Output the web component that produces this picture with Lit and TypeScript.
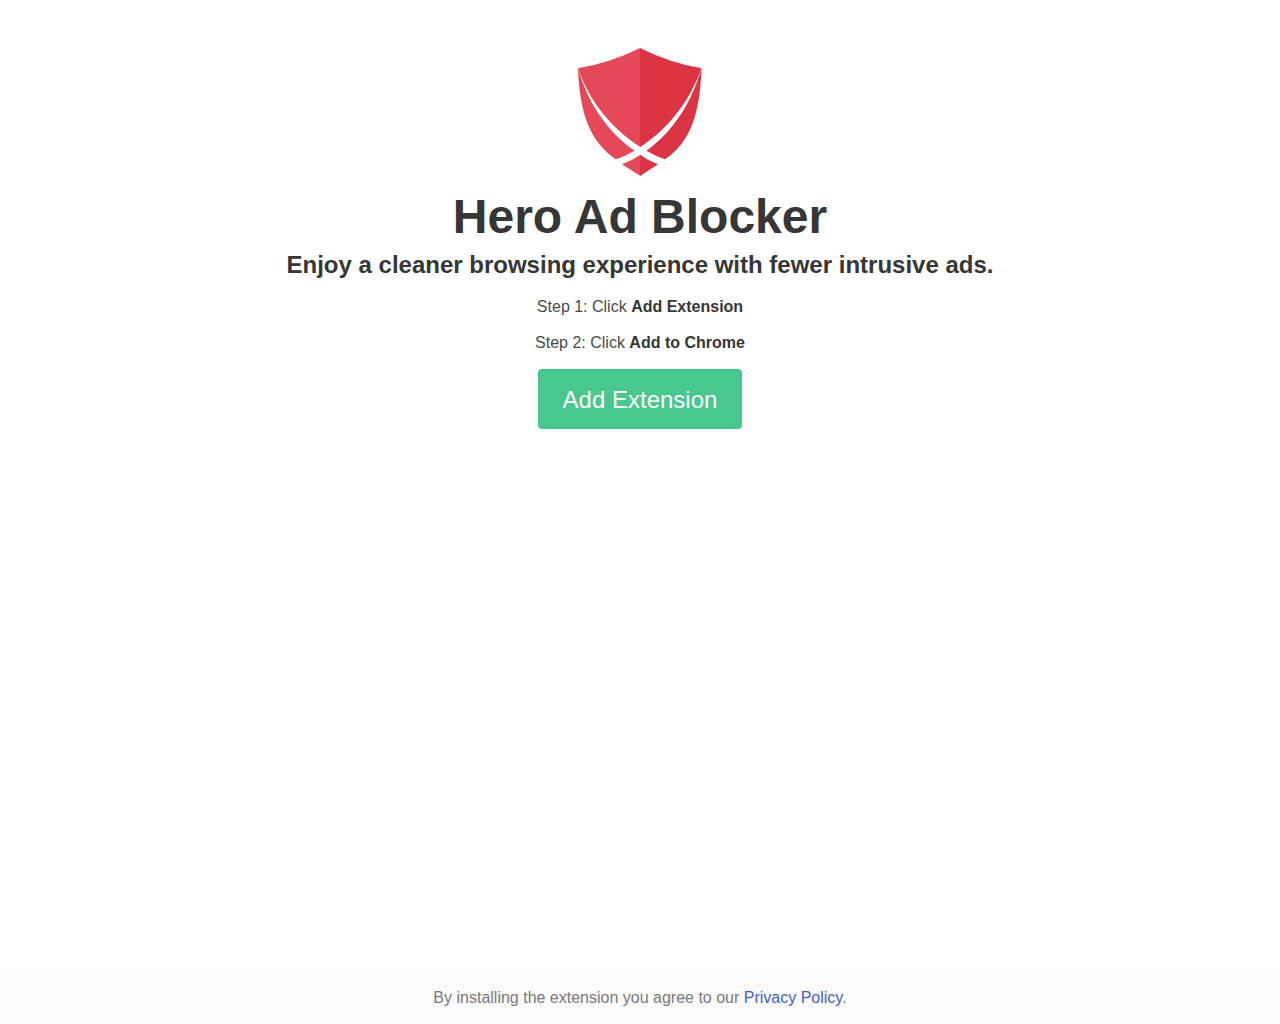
import { LitElement, html, css } from "lit";
import { customElement } from "lit/decorators.js";

@customElement("hero-shield")
class HeroShield extends LitElement {
  static styles = css`
    :host {
      display: block;
      width: 128px;
      height: 128px;
    }
    .shield {
      display: block;
      width: 100%;
      height: 100%;
    }
    .light {
      fill: #e54858;
    }
    .dark {
      fill: #dc3444;
    }
  `;

  render() {
    return html`
      <svg class="shield" viewBox="0 0 128 128" role="img" aria-label="Shield">
        <path class="light" d="M64 0Q34 15 2 20.300C12 50 33 79 64.500 99.300V0Z" />
        <path class="light" d="M2 20.300C3.500 66 14.500 94 39.700 111.200Q50 108 58.500 102.700C29 82 11.500 53 2 20.300Z" />
        <path class="light" d="M64.500 106.700Q56 112.500 46 116.300L64.500 128Z" />
        <path class="dark" d="M64 0Q94 15 125.500 20.300C115 50 95 79 64 99.300Z" />
        <path class="dark" d="M125.500 20.300C124 66 114 95 89 111.200Q79 108 70.500 102.700C99 82 116 53 125.500 20.300Z" />
        <path class="dark" d="M64 106.700Q72 112.500 82 116.300L64 128Z" />
      </svg>
    `;
  }
}

@customElement("app-root")
class AppRoot extends LitElement {
  static styles = css`
    :host {
      display: flex;
      flex-direction: column;
      min-height: 100vh;
      background: #fff;
      color: #4a4a4a;
      font-family: "Liberation Sans", Helvetica, Arial, sans-serif;
      font-size: 16px;
      line-height: 24px;
    }
    .hero {
      flex: 1;
      display: flex;
      flex-direction: column;
      align-items: center;
      padding: 48px 24px;
      text-align: center;
    }
    .title,
    .subtitle,
    .step {
      margin: 0;
    }
    .title {
      margin-top: 14px;
      color: #363636;
      font-size: 48px;
      line-height: 54px;
      font-weight: 700;
    }
    .subtitle {
      margin-top: 6px;
      color: #363636;
      font-size: 24px;
      line-height: 30px;
      font-weight: 700;
    }
    .steps {
      display: flex;
      flex-direction: column;
      gap: 12px;
      margin: 15px 0 14px;
    }
    .step strong {
      color: #363636;
    }
    .add {
      height: 60px;
      padding: 2px 25px 0;
      border: 0;
      border-radius: 4px;
      background: #48c78e;
      color: #fff;
      font: inherit;
      font-size: 24px;
      cursor: pointer;
    }
    .footer {
      padding: 18px 24px 14px;
      background: #fafafa;
      color: #7a7a7a;
      text-align: center;
    }
    .link {
      color: #485fc7;
      text-decoration: none;
    }
  `;

  render() {
    return html`
      <main class="hero">
        <hero-shield></hero-shield>
        <h1 class="title">Hero Ad Blocker</h1>
        <h2 class="subtitle">Enjoy a cleaner browsing experience with fewer intrusive ads.</h2>
        <div class="steps">
          <p class="step">Step 1: Click <strong>Add Extension</strong></p>
          <p class="step">Step 2: Click <strong>Add to Chrome</strong></p>
        </div>
        <button class="add" type="button">Add Extension</button>
      </main>
      <footer class="footer">
        By installing the extension you agree to our <a class="link" href="#privacy">Privacy Policy</a>.
      </footer>
    `;
  }
}
